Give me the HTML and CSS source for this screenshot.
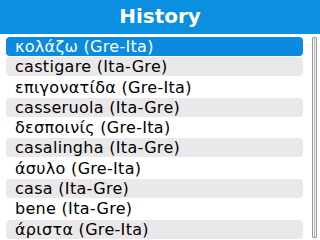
FILE: index.html
```html
<!DOCTYPE html>
<html>
<head>
<meta charset="utf-8">
<link rel="stylesheet" href="styles.css">
</head>
<body>
<div class="screen">
  <header class="title">History</header>
  <main class="content">
    <ul class="list">
      <li class="row selected">κολάζω (Gre-Ita)</li>
      <li class="row alt">castigare (Ita-Gre)</li>
      <li class="row">επιγονατίδα (Gre-Ita)</li>
      <li class="row alt">casseruola (Ita-Gre)</li>
      <li class="row">δεσποινίς (Gre-Ita)</li>
      <li class="row alt">casalingha (Ita-Gre)</li>
      <li class="row">άσυλο (Gre-Ita)</li>
      <li class="row alt">casa (Ita-Gre)</li>
      <li class="row">bene (Ita-Gre)</li>
      <li class="row alt">άριστα (Gre-Ita)</li>
    </ul>
    <div class="scrollbar"><div class="thumb"></div></div>
  </main>
</div>
</body>
</html>
```
FILE: styles.css
```css
html, body {
  margin: 0;
  padding: 0;
  background: #ffffff;
}
.screen {
  width: 320px;
  height: 240px;
  overflow: hidden;
  font-family: "DejaVu Sans", Verdana, sans-serif;
}
.title {
  height: 34px;
  background: #0b8fe0;
  color: #ffffff;
  font-weight: bold;
  font-size: 20px;
  display: flex;
  align-items: center;
  justify-content: center;
  padding-bottom: 2px;
  box-sizing: border-box;
}
.content {
  display: flex;
  padding-top: 3px;
}
.list {
  list-style: none;
  margin: 0 0 0 6px;
  padding: 0;
  width: 297px;
  display: grid;
  grid-auto-rows: 19px;
  row-gap: 1.3px;
}
.row {
  font-size: 16px;
  letter-spacing: 0.3px;
  color: #000000;
  padding-left: 9px;
  display: flex;
  align-items: center;
  border-radius: 4px;
  white-space: nowrap;
}
.row.alt {
  background: #ebe8eb;
}
.row.selected {
  background: #0a8be0;
  color: #ffffff;
}
.scrollbar {
  margin-left: 9px;
  width: 5px;
  height: 201px;
  border: 1px solid #9a9a9a;
  border-radius: 1px;
  box-sizing: border-box;
  background: #f4f4f4;
  display: flex;
  justify-content: center;
}
.thumb {
  width: 1px;
  height: 100%;
  background: #b8b8b8;
}
```
